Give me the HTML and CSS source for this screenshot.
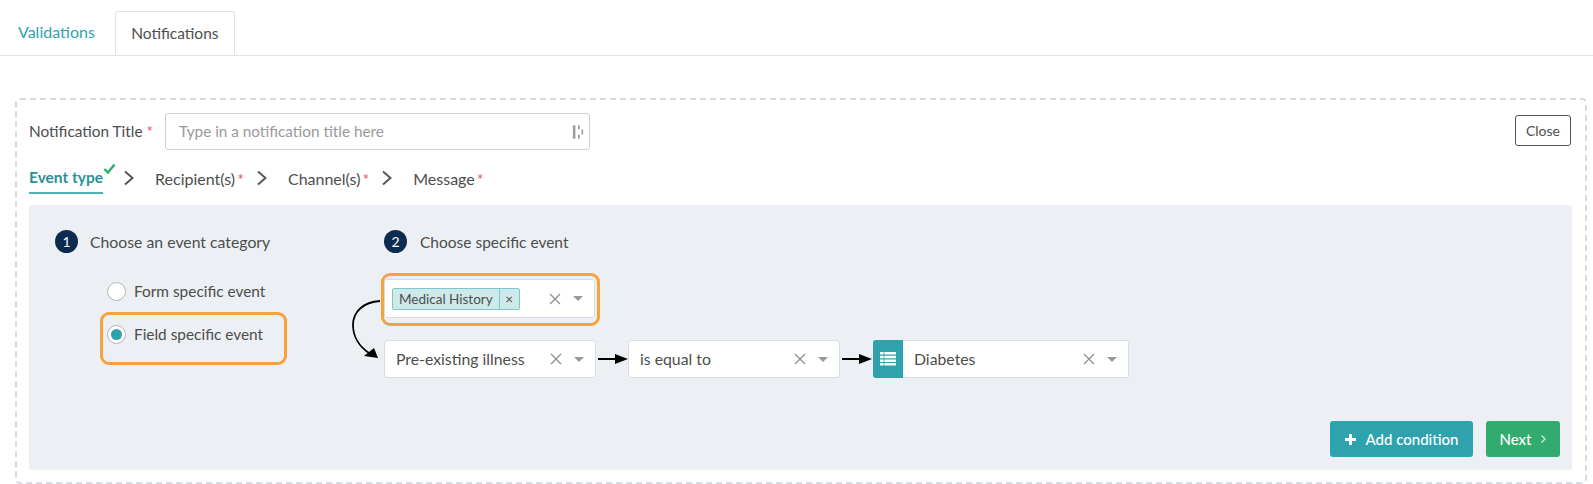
FILE: index.html
```html
<!DOCTYPE html>
<html lang="en">
<head>
    <meta charset="UTF-8">
    <title>Notifications</title>
    <link rel="stylesheet" href="styles.css">
</head>
<body>
    <div class="tabs">
        <a class="tab">Validations</a>
        <a class="tab active">Notifications</a>
    </div>

    <div class="notification-box">
        <div class="title-row">
            <label class="title-label">Notification Title <span class="req">*</span></label>
            <div class="title-input">
                <span class="placeholder">Type in a notification title here</span>
                <svg class="token-icon" width="12" height="16" viewBox="0 0 14 18"><path d="M1 1h3v16H1zM7 1h2v5H7zM7 12h2v5H7zM11 6h2v6h-2z" fill="#9a9fa6"/></svg>
            </div>
            <button class="close-btn">Close</button>
        </div>

        <div class="steps">
            <span class="step current">Event type<svg class="check" width="13" height="11" viewBox="0 0 13 11"><path d="M1.5 6l3.5 3.5 6.5-8" fill="none" stroke="#2eaa6b" stroke-width="2.4"/></svg></span>
            <svg class="chevron first-chevron" width="12" height="16" viewBox="0 0 12 16"><path d="M2 1.5L9.5 8 2 14.5" fill="none" stroke="#555" stroke-width="1.9"/></svg>
            <span class="step">Recipient(s)<span class="req">*</span></span>
            <svg class="chevron" width="12" height="16" viewBox="0 0 12 16"><path d="M2 1.5L9.5 8 2 14.5" fill="none" stroke="#555" stroke-width="1.9"/></svg>
            <span class="step">Channel(s)<span class="req">*</span></span>
            <svg class="chevron" width="12" height="16" viewBox="0 0 12 16"><path d="M2 1.5L9.5 8 2 14.5" fill="none" stroke="#555" stroke-width="1.9"/></svg>
            <span class="step">Message<span class="req">*</span></span>
        </div>

        <div class="panel">
            <div class="columns">
                <div class="col-category">
                    <div class="col-head"><span class="num">1</span>Choose an event category</div>
                    <div class="radios">
                        <div class="radio-row"><span class="radio"></span>Form specific event</div>
                        <div class="radio-row marked"><span class="radio on"></span>Field specific event</div>
                    </div>
                </div>
                <div class="col-event">
                    <div class="col-head"><span class="num">2</span>Choose specific event</div>
                    <div class="select first marked-select">
                        <span class="chip"><span class="chip-text">Medical History</span><span class="chip-x">×</span></span>
                        <span class="select-tools">
                            <svg width="12" height="12" viewBox="0 0 12 12"><path d="M1 1l10 10M11 1L1 11" stroke="#8f8f8f" stroke-width="1.3"/></svg>
                            <span class="caret"></span>
                        </span>
                    </div>
                    <div class="select-row">
                        <div class="select s-small">
                            <span class="select-value">Pre-existing illness</span>
                            <span class="select-tools">
                                <svg width="12" height="12" viewBox="0 0 12 12"><path d="M1 1l10 10M11 1L1 11" stroke="#8f8f8f" stroke-width="1.3"/></svg>
                                <span class="caret"></span>
                            </span>
                        </div>
                        <svg class="link-arrow" width="33" height="12" viewBox="0 0 33 12"><path d="M2 6h22" stroke="#000" stroke-width="2"/><path d="M19 1l13 5-13 5z" fill="#000"/></svg>
                        <div class="select s-small">
                            <span class="select-value">is equal to</span>
                            <span class="select-tools">
                                <svg width="12" height="12" viewBox="0 0 12 12"><path d="M1 1l10 10M11 1L1 11" stroke="#8f8f8f" stroke-width="1.3"/></svg>
                                <span class="caret"></span>
                            </span>
                        </div>
                        <svg class="link-arrow" width="33" height="12" viewBox="0 0 33 12"><path d="M2 6h22" stroke="#000" stroke-width="2"/><path d="M19 1l13 5-13 5z" fill="#000"/></svg>
                        <div class="select s-large">
                            <span class="addon">
                                <svg width="16" height="14" viewBox="0 0 16 14"><path d="M0 0h16v2.5H0zM0 3.7h16v2.5H0zM0 7.4h16v2.5H0zM0 11.1h16v2.5H0z" fill="#fff"/><path d="M4 0v14" stroke="#2fa3ad" stroke-width=".8"/></svg>
                            </span>
                            <span class="select-value">Diabetes</span>
                            <span class="select-tools">
                                <svg width="12" height="12" viewBox="0 0 12 12"><path d="M1 1l10 10M11 1L1 11" stroke="#8f8f8f" stroke-width="1.3"/></svg>
                                <span class="caret"></span>
                            </span>
                        </div>
                    </div>
                    <svg class="curve-arrow" width="32" height="62" viewBox="0 0 32 62"><path d="M29 1C12 2 2 12 2 25c0 12 7 22 16 28" fill="none" stroke="#000" stroke-width="1.8"/><path d="M27 58l-14-2 10-8z" fill="#000"/></svg>
                </div>
            </div>
            <div class="actions">
                <button class="btn btn-add"><svg width="13" height="13" viewBox="0 0 13 13"><path d="M6.5 1v11M1 6.5h11" stroke="#fff" stroke-width="3"/></svg>Add condition</button>
                <button class="btn btn-next">Next<svg width="7" height="10" viewBox="0 0 7 10"><path d="M1.5 1.5L5 5 1.5 8.5" fill="none" stroke="#d6f0e2" stroke-width="1.2"/></svg></button>
            </div>
        </div>
    </div>
</body>
</html>
```

FILE: styles.css
```css
body {
    margin: 0;
    font-family: "Lato", "Noto Sans", sans-serif;
    font-size: 15px;
    color: #4d4d4d;
    background: #fff;
    overflow: hidden;
}
.tabs {
    display: flex;
    height: 44px;
    margin-top: 11px;
    padding-left: 1px;
    border-bottom: 1px solid #dfe2e6;
    font-size: 16px;
}
.tab {
    padding: 0 20px 0 17px;
    line-height: 42px;
    color: #2fa3ad;
}
.tab.active {
    color: #4d4d4d;
    background: #fff;
    border: 1px solid #dfe2e6;
    border-bottom: 1px solid #fff;
    border-radius: 3px 3px 0 0;
    height: 44px;
    box-sizing: border-box;
    padding: 0;
    width: 120px;
    text-align: center;
    font-size: 15.5px;
}
.notification-box {
    margin: 42px 6px 0 15px;
    height: 386px;
    box-sizing: border-box;
    border: 2px dashed #d7dade;
    border-radius: 5px;
    padding: 13px 12px 0;
}
.title-row {
    display: flex;
    align-items: center;
    height: 37px;
}
.title-label {
    width: 136px;
    white-space: nowrap;
    font-size: 15.4px;
    padding-bottom: 2px;
}
.req {
    color: #f0525f;
}
.title-input {
    width: 425px;
    height: 37px;
    box-sizing: border-box;
    border: 1px solid #ccd1dc;
    border-radius: 3px;
    padding: 0 5px 0 13px;
    display: flex;
    align-items: center;
    justify-content: space-between;
}
.placeholder {
    color: #9a9a9a;
    font-size: 15.3px;
    padding-bottom: 2px;
}
.close-btn {
    align-self: flex-start;
    margin: 2px 2px 0 auto;
    width: 56px;
    height: 31px;
    background: #fff;
    border: 1px solid #555;
    border-radius: 3px;
    font: inherit;
    font-size: 14px;
    color: #4d4d4d;
    padding: 0;
}
.steps {
    display: flex;
    align-items: center;
    height: 30px;
    margin-top: 13px;
    font-size: 16px;
}
.step {
    position: relative;
    white-space: nowrap;
}
.step .req {
    margin-left: 2px;
}
.step.current {
    color: #2a8f98;
    font-weight: 700;
    font-size: 15.5px;
    padding-bottom: 6px;
    margin-top: 6px;
    border-bottom: 2px solid #4fb0b8;
}
.check {
    position: absolute;
    right: -13px;
    top: -5px;
}
.chevron {
    margin: 0 20px 0 12px;
}
.first-chevron {
    margin: 0 20px;
}
.panel {
    background: #ecf0f4;
    border-radius: 3px;
    height: 265px;
    margin-top: 12px;
    position: relative;
    margin-right: 1px;
}
.columns {
    display: flex;
    padding: 25px 25px 0 26px;
}
.col-category {
    width: 329px;
}
.col-event {
    position: relative;
}
.col-head {
    display: flex;
    align-items: center;
    height: 23px;
    font-size: 15.5px;
}
.col-category .col-head {
    font-size: 15.8px;
}
.num {
    width: 23px;
    height: 23px;
    border-radius: 50%;
    background: #0d2a4f;
    color: #fff;
    font-size: 14px;
    text-align: center;
    line-height: 23px;
    margin-right: 13px;
}
.col-category .num {
    margin-right: 12px;
}
.radios {
    margin: 28px 0 0 52px;
    font-size: 15.4px;
}
.radio-row {
    display: flex;
    align-items: center;
    height: 20px;
    margin-bottom: 23px;
    position: relative;
}
.radio {
    width: 19px;
    height: 19px;
    box-sizing: border-box;
    border: 1px solid #b5b5b5;
    border-radius: 50%;
    background: #fff;
    margin-right: 8px;
    position: relative;
}
.radio.on::after {
    content: "";
    position: absolute;
    left: 3px;
    top: 3px;
    width: 11px;
    height: 11px;
    border-radius: 50%;
    background: #2fa3ad;
}
/* orange annotation boxes */
.marked::after, .marked-select::after {
    content: "";
    position: absolute;
    border: 3px solid #f9a13a;
    border-radius: 9px;
    box-sizing: border-box;
}
.marked::after {
    left: -7px;
    top: -12px;
    width: 187px;
    height: 53px;
}
.marked-select::after {
    left: -4px;
    top: -7px;
    width: 219px;
    height: 53px;
}
.select {
    position: relative;
    display: flex;
    align-items: center;
    height: 38px;
    box-sizing: border-box;
    background: #fff;
    border: 1px solid #d8dbe0;
    border-radius: 3px;
    padding-left: 11px;
    font-size: 15.8px;
}
.select.first {
    width: 211px;
    height: 39px;
    margin-top: 26px;
    padding-left: 7px;
}
.select-row {
    display: flex;
    align-items: center;
    margin-top: 22px;
}
.select-value {
    padding-bottom: 2px;
}
.s-small {
    width: 212px;
}
.s-large {
    width: 256px;
    margin-left: 1px;
    padding-left: 0;
}
.select-tools {
    margin-left: auto;
    margin-right: 11px;
    display: flex;
    align-items: center;
    gap: 12px;
}
.caret {
    width: 0;
    height: 0;
    border-left: 5px solid transparent;
    border-right: 5px solid transparent;
    border-top: 5px solid #999;
}
.chip {
    display: flex;
    height: 22px;
    box-sizing: border-box;
    background: #cde9ea;
    border: 1px solid #7fc7cc;
    border-radius: 2px;
    font-size: 13.5px;
    line-height: 20px;
}
.chip-text {
    padding: 0 6px;
    border-right: 1px solid #7fc7cc;
}
.chip-x {
    width: 19px;
    text-align: center;
}
.link-arrow {
    flex: none;
    margin: 0 -1px 0 0;
}
.addon {
    width: 30px;
    align-self: stretch;
    margin: -1px 11px -1px -1px;
    background: #2fa3ad;
    border-radius: 3px 0 0 3px;
    display: flex;
    align-items: center;
    justify-content: center;
}
.curve-arrow {
    position: absolute;
    left: -33px;
    top: 70px;
}
.actions {
    position: absolute;
    right: 12px;
    bottom: 13px;
    display: flex;
    gap: 13px;
}
.btn {
    height: 36px;
    border: none;
    border-radius: 3px;
    color: #fff;
    font: inherit;
    font-weight: 500;
    display: flex;
    align-items: center;
    justify-content: center;
    gap: 8px;
    padding: 0;
}
.btn-add {
    width: 143px;
    background: #2fa3ad;
}
.btn-next {
    width: 74px;
    background: #32ab6e;
}
```
